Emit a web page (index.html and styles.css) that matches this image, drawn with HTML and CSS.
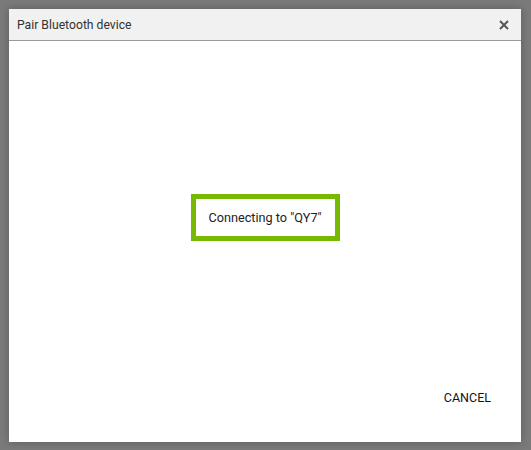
FILE: index.html
```html
<!DOCTYPE html>
<html lang="en">
<head>
  <meta charset="UTF-8">
  <meta name="viewport" content="width=device-width, initial-scale=1.0">
  <title>Pair Bluetooth device</title>
  <link rel="stylesheet" href="styles.css">
</head>
<body>
  <div class="dialog">
    <div class="dialog-header">
      <span class="dialog-title">Pair Bluetooth device</span>
      <button class="close" aria-label="Close">
        <svg width="10" height="10" viewBox="0 0 10 10">
          <path d="M1 1L9 9M9 1L1 9" stroke="#555" stroke-width="2" />
        </svg>
      </button>
    </div>
    <div class="dialog-body">
      <div class="status">Connecting to "QY7"</div>
    </div>
    <div class="dialog-footer">
      <button class="cancel">CANCEL</button>
    </div>
  </div>
</body>
</html>
```

FILE: styles.css
```css
body {
  font-family: Roboto, "Liberation Sans", sans-serif;
  margin: 0;
  padding: 9px;
  background: #7a7a7a;
}
.dialog {
  width: 512px;
  height: 433px;
  background: #fff;
  display: flex;
  flex-direction: column;
  box-shadow: 0 0 8px rgba(0,0,0,0.25);
}
.dialog-header {
  height: 31px;
  background: #f1f1f1;
  border-bottom: 1px solid #9a9a9a;
  display: flex;
  align-items: center;
  justify-content: space-between;
  padding: 0 9px 0 8px;
}
.dialog-title {
  font-size: 12.2px;
  color: #333;
}
.close {
  background: none;
  border: none;
  padding: 0;
  width: 16px;
  height: 16px;
  display: flex;
  align-items: center;
  justify-content: center;
}
.dialog-body {
  flex: 1;
  display: flex;
  align-items: center;
  justify-content: center;
}
.status {
  border: 5px solid #76b900;
  width: 139px;
  height: 37px;
  line-height: 37px;
  text-align: center;
  font-size: 12.7px;
  color: #222;
  white-space: nowrap;
}
.dialog-footer {
  height: 49px;
  display: flex;
  justify-content: flex-end;
  align-items: flex-start;
  padding-right: 22px;
}
.cancel {
  background: none;
  border: none;
  font-family: inherit;
  font-size: 12.5px;
  color: #111;
  padding: 0 8px;
  height: 10px;
  line-height: 10px;
}
```
